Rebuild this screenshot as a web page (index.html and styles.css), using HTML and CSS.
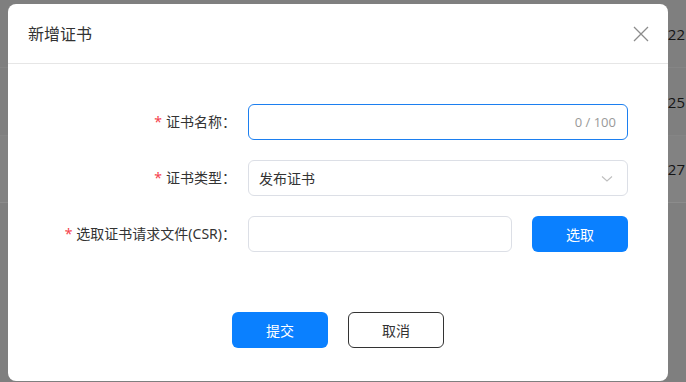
FILE: index.html
```html
<!DOCTYPE html>
<html lang="zh-CN">
<head>
<meta charset="utf-8">
<title>新增证书</title>
<link rel="stylesheet" href="styles.css">
</head>
<body>
<div class="backdrop">
  <div class="table">
    <div class="row"><span class="cell">22</span></div>
    <div class="row"><span class="cell">25</span></div>
    <div class="row row-hover"><span class="cell">27</span></div>
  </div>
</div>
<div class="modal">
  <div class="modal-header">
    <span class="modal-title">新增证书</span>
    <svg class="close" width="16" height="16" viewBox="0 0 16 16"><path d="M1 1 L15 15 M15 1 L1 15" stroke="#8c8c8c" stroke-width="1.3" fill="none"/></svg>
  </div>
  <div class="modal-body">
    <div class="form-row">
      <label class="label"><span class="req">*</span>证书名称：</label>
      <div class="control input focused"><span class="count">0 / 100</span></div>
    </div>
    <div class="form-row">
      <label class="label"><span class="req">*</span>证书类型：</label>
      <div class="control input select">
        <span class="value">发布证书</span>
        <svg class="chev" width="12" height="8" viewBox="0 0 12 8"><path d="M1 1.5 L6 6 L11 1.5" stroke="#bfbfbf" stroke-width="1.1" fill="none"/></svg>
      </div>
    </div>
    <div class="form-row">
      <label class="label"><span class="req">*</span>选取证书请求文件(CSR)：</label>
      <div class="file-group">
        <div class="input file"></div>
        <button class="btn primary">选取</button>
      </div>
    </div>
  </div>
  <div class="modal-footer">
    <button class="btn primary">提交</button>
    <button class="btn default">取消</button>
  </div>
</div>
</body>
</html>
```
FILE: styles.css
```css
* { box-sizing: border-box; }
html, body { margin: 0; padding: 0; }
body {
  width: 686px;
  height: 382px;
  overflow: hidden;
  background: #7f7f7f;
  font-family: "Noto Sans", "Noto Sans CJK SC", sans-serif;
  position: relative;
}
.backdrop { position: absolute; inset: 0; }
.table { display: flex; flex-direction: column; }
.row {
  height: 68px;
  display: flex;
  align-items: center;
  justify-content: flex-end;
  border-bottom: 1px solid #858585;
}
.row-hover { background: #828282; height: 67px; border-bottom-color: #8c8c8c; }
.cell {
  color: #151515;
  font-size: 15px;
  margin-right: 1px;
  line-height: 18px;
  font-family: "Open Sans", "Noto Sans", sans-serif;
}
.modal {
  position: absolute;
  left: 8px;
  top: 4px;
  width: 660px;
  height: 377px;
  background: #fff;
  border-radius: 8px;
  display: flex;
  flex-direction: column;
}
.modal-header {
  height: 60px;
  border-bottom: 1px solid #e6e6e6;
  display: flex;
  align-items: center;
  justify-content: space-between;
  padding: 0 19px 0 20px;
}
.modal-title { font-size: 16px; color: #333; line-height: 22px; }
.close { display: block; }
.modal-body {
  padding-top: 40px;
  display: flex;
  flex-direction: column;
  gap: 20px;
}
.form-row { display: flex; align-items: center; height: 36px; }
.label {
  width: 228px;
  text-align: right;
  font-size: 14px;
  color: #333;
  margin-right: 12px;
  line-height: 20px;
  white-space: nowrap;
}
.req { color: #f5424d; margin-right: 4px; }
.input {
  height: 36px;
  border: 1px solid #dcdfe6;
  border-radius: 6px;
  background: #fff;
}
.control {
  width: 380px;
  display: flex;
  align-items: center;
  padding: 0 11px 0 10px;
}
.focused { border-color: #1c7ff0; justify-content: flex-end; }
.count { font-size: 13px; color: #999; font-family: "Open Sans", "Noto Sans", sans-serif; }
.select { justify-content: space-between; padding-right: 14px; }
.value { font-size: 14px; color: #333; }
.chev { display: block; margin-top: 1px; }
.file-group { display: flex; gap: 20px; }
.file { width: 264px; }
.btn {
  width: 96px;
  height: 36px;
  border-radius: 6px;
  font-family: "Noto Sans", "Noto Sans CJK SC", sans-serif;
  font-size: 14px;
  cursor: pointer;
  padding: 0;
}
.primary { background: #0a80ff; color: #fff; border: none; }
.default { background: #fff; color: #333; border: 1px solid #333; }
.modal-footer {
  margin-top: 60px;
  display: flex;
  justify-content: center;
  gap: 20px;
}
```
